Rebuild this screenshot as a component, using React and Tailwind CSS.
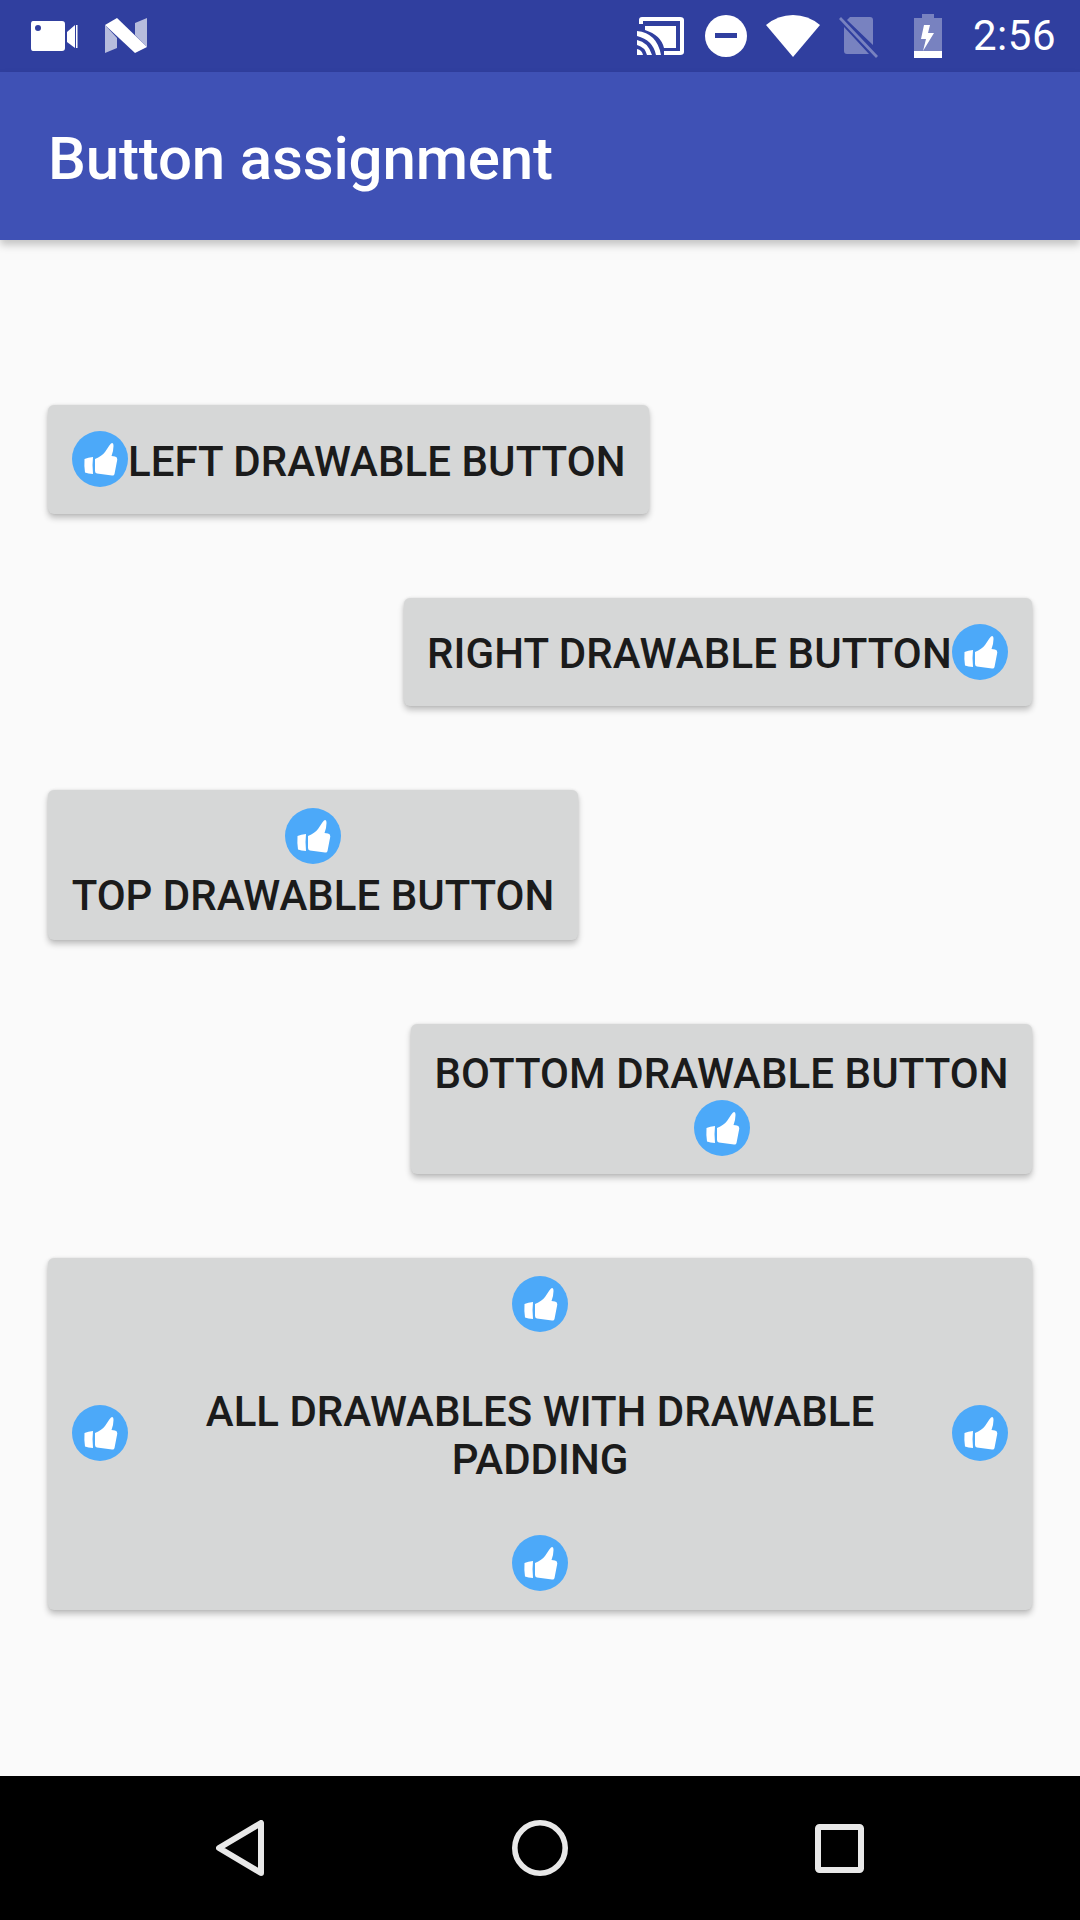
import React from "react";

const ROBOTO = "font-['Roboto',sans-serif]";
const BTN = "flex rounded-[6px] bg-[#d6d7d7] text-[42px] leading-[48px] font-medium text-[#1b1b1b] shadow-[0_4px_6px_rgba(0,0,0,0.24),0_0_3px_rgba(0,0,0,0.1)]";

function Thumb() {
  return (
    <svg width="56" height="56" viewBox="0 0 56 56" className="shrink-0">
      <circle cx="28" cy="28" r="28" fill="#4ca9f9" />
      <path d="M12.5 28 Q16 26.5 21 26 Q20 34 21 43 Q16 42.5 13 41.5 Q12 35 12.5 28 Z" fill="#fff" />
      <path d="M23 28 Q30 25 33 21 L37 15 Q39 12 40 12 Q41.5 12 41.5 15 Q41.5 20 39.5 25 L43 25.5 Q45.5 26 45.3 28.5 L42.5 43 Q42 45 40 44.5 L25 42.5 Q23 42 23 40 Z" fill="#fff" />
    </svg>
  );
}

function StatusBar() {
  return (
    <div className="flex h-[72px] items-center bg-[#303f9f] pl-[30px] pr-[24px] text-white">
      <svg width="48" height="32" viewBox="0 0 48 32">
        <path fillRule="evenodd" d="M3 1 H32 Q35 1 35 4 V28 Q35 31 32 31 H3 Q1 31 1 28 V4 Q1 1 3 1 Z M8 5 A3 3 0 1 0 8 11 A3 3 0 1 0 8 5 Z" fill="#fff" />
        <path d="M37 12 L45 5 V28 L37 22 Z" fill="#fff" />
        <rect x="46" y="5" width="1.5" height="23" fill="#fff" />
      </svg>
      <svg width="42" height="36" viewBox="0 0 42 36" className="ml-[27px]">
        <path d="M0 7 L12 0 L42 29 L30 35 Z" fill="#fff" />
        <path d="M0 7 L12 20 V30 L0 35 Z M30 5 L42 0 V29 L30 17 Z" fill="#fff" fillOpacity="0.65" />
      </svg>
      <div className="flex-1" />
      <svg width="48" height="40" viewBox="0 0 48 40">
        <path d="M2 8 V4 Q2 1 5 1 H43 Q47 1 47 4 V36 Q47 39 43 39 H27 V35 H43 V5 H6 V8 Z" fill="#fff" />
        <path d="M8 10 H39 V32 H27 Q24 19 8 14 Z" fill="#fff" />
        <path d="M0 15 Q20 17 24 39 H19 Q16 24 0 20 Z M0 24 Q11 26 15 39 H10 Q8 31 0 29 Z M0 33 Q5 34 6 39 H0 Z" fill="#fff" />
      </svg>
      <svg width="42" height="42" viewBox="0 0 42 42" className="ml-[20px]">
        <circle cx="21" cy="21" r="21" fill="#fff" />
        <rect x="10" y="18" width="22" height="5" fill="#303f9f" />
      </svg>
      <svg width="54" height="42" viewBox="0 0 54 42" className="ml-[19px]">
        <path d="M27 42 L0 10 Q12 0 27 0 Q42 0 54 10 Z" fill="#fff" />
      </svg>
      <svg width="42" height="44" viewBox="0 0 42 44" className="ml-[16px]">
        <path d="M14 3 H34 Q37 3 37 6 V31 L11 6 Z M8 13 L33 40 H11 Q8 40 8 37 Z" fill="#fff" fillOpacity="0.35" />
        <path d="M3 5 L5 3 L42 42 L40 44 Z" fill="#fff" fillOpacity="0.35" />
      </svg>
      <svg width="28" height="44" viewBox="0 0 28 44" className="ml-[36px]">
        <path d="M0 4 H8 V0 H20 V4 H28 V37 H0 Z" fill="#fff" fillOpacity="0.35" />
        <rect x="0" y="37" width="28" height="7" fill="#fff" />
        <path d="M16 11 H10 L7 25 H12 L9 37 L20 19 H14 Z" fill="#fff" />
      </svg>
      <span className="ml-[31px] text-[42px] leading-none tracking-[0.5px]">2:56</span>
    </div>
  );
}

function NavBar() {
  return (
    <div className="flex h-[144px] items-center justify-center bg-black">
      <svg width="48" height="56" viewBox="0 0 48 56" className="mr-[248px]">
        <path d="M45 3 V53 L3 28 Z" fill="none" stroke="#e8e8e8" strokeWidth="6" strokeLinejoin="round" />
      </svg>
      <svg width="56" height="56" viewBox="0 0 56 56">
        <circle cx="28" cy="28" r="25.2" fill="none" stroke="#e8e8e8" strokeWidth="5.6" />
      </svg>
      <svg width="49" height="49" viewBox="0 0 49 49" className="ml-[247px]">
        <rect x="3" y="3" width="43" height="43" rx="1.5" fill="none" stroke="#e8e8e8" strokeWidth="6" />
      </svg>
    </div>
  );
}

export default function App() {
  return (
    <div className={`flex h-[1920px] w-[1080px] flex-col bg-[#fafafa] ${ROBOTO}`}>
      <StatusBar />
      <div className="relative z-10 flex h-[168px] items-center bg-[#3f51b5] pl-[48px] pt-[5px] text-[60px] font-medium tracking-[-0.15px] text-white shadow-[0_5px_8px_rgba(0,0,0,0.22)]">
        Button assignment
      </div>

      <div className="flex flex-1 flex-col gap-[84px] px-[48px] pt-[165px]">
        <div className={`${BTN} h-[109px] w-[601px] items-center self-start pl-[24px] pb-[1px]`}>
          <Thumb />
          <span className="pt-[5px] tracking-[0.05px]">LEFT DRAWABLE BUTTON</span>
        </div>

        <div className={`${BTN} h-[108px] w-[628px] items-center self-end pl-[23px] pb-[1px]`}>
          <span className="pt-[5px] tracking-[0.1px]">RIGHT DRAWABLE BUTTON</span>
          <Thumb />
        </div>

        <div className={`${BTN} h-[150px] w-[530px] flex-col items-center self-start pt-[18px]`}>
          <Thumb />
          <span className="mt-[8px]">TOP DRAWABLE BUTTON</span>
        </div>

        <div className={`${BTN} h-[150px] w-[621px] flex-col items-center self-end pt-[26px]`}>
          <span className="tracking-[0.05px]">BOTTOM DRAWABLE BUTTON</span>
          <div className="mt-[2px]">
            <Thumb />
          </div>
        </div>

        <div className={`${BTN} h-[352px] flex-col items-center px-[24px] pb-[19px] pt-[18px]`}>
          <Thumb />
          <div className="flex w-full flex-1 items-center pb-[1px]">
            <Thumb />
            <span className="flex-1 px-[60px] pt-[5px] text-center">ALL DRAWABLES WITH DRAWABLE PADDING</span>
            <Thumb />
          </div>
          <Thumb />
        </div>
      </div>

      <NavBar />
    </div>
  );
}
